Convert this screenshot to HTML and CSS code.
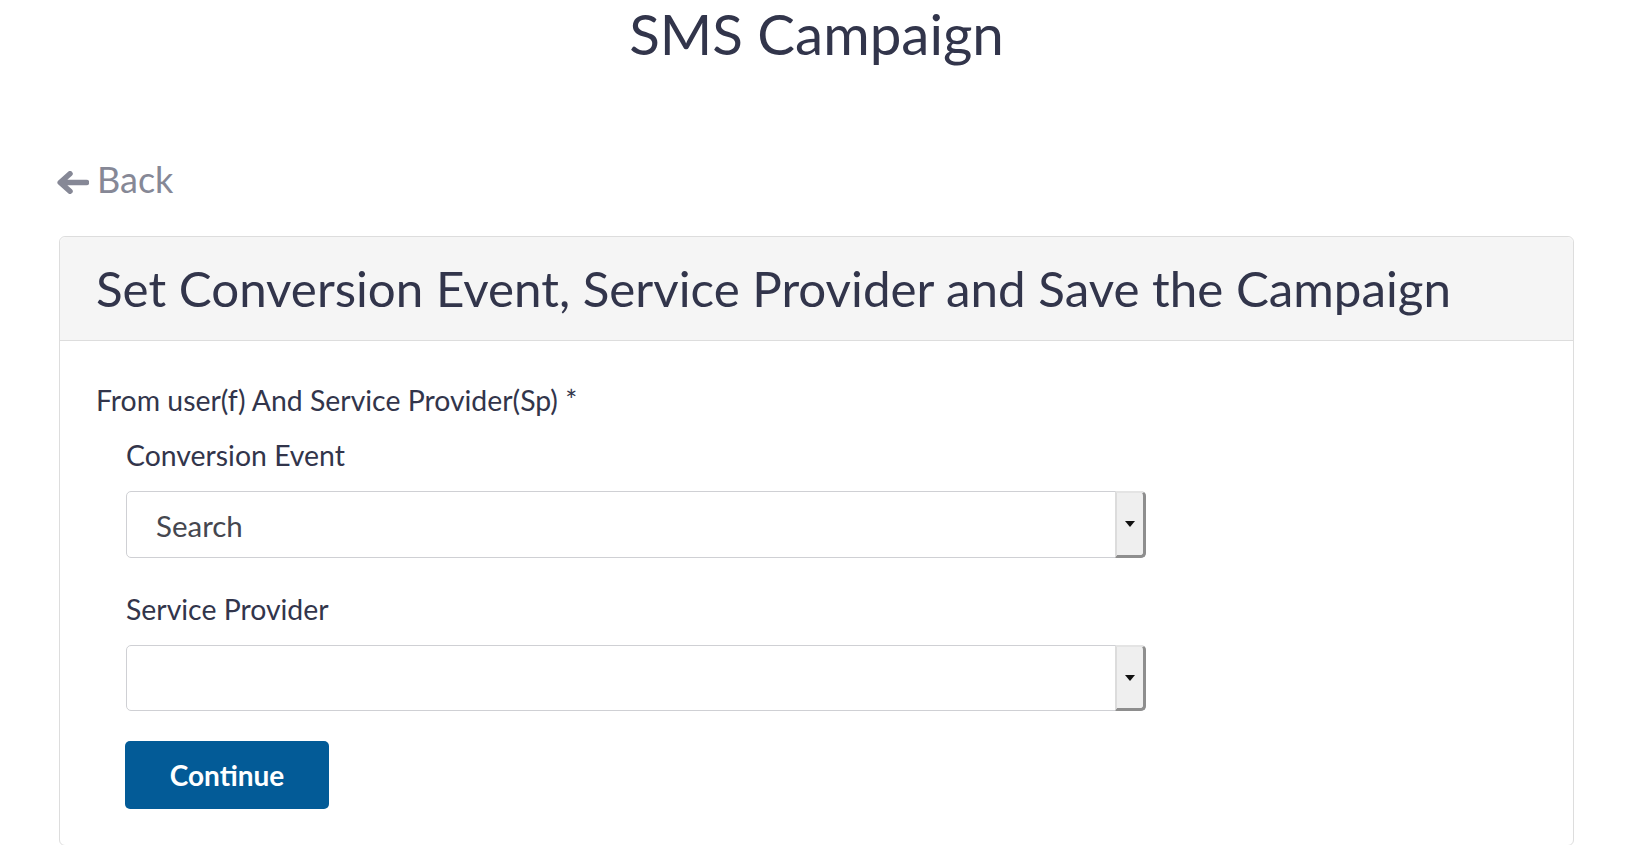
FILE: index.html
```html
<!DOCTYPE html>
<html>
<head>
<meta charset="utf-8">
<link rel="stylesheet" href="styles.css">
</head>
<body>
<h1 class="page-title">SMS Campaign</h1>
<a class="back-link" href="#">
  <svg class="back-icon" width="32" height="23" viewBox="0 0 32 23"><path d="M29.5 11.5 H4.5 M13 2.8 L3.2 11.5 L13 20.2" fill="none" stroke="currentColor" stroke-width="5.5" stroke-linecap="round" stroke-linejoin="round"/></svg>
  <span>Back</span>
</a>
<div class="card">
  <div class="card-header">
    <h2 class="card-title">Set Conversion Event, Service Provider and Save the Campaign</h2>
  </div>
  <div class="card-body">
    <div class="group-label">From user(f) And Service Provider(Sp) *</div>
    <div class="group">
      <div class="field-label">Conversion Event</div>
      <div class="select">
        <div class="select-value">Search</div>
        <div class="select-btn"><span class="caret"></span></div>
      </div>
      <div class="field-label second">Service Provider</div>
      <div class="select short">
        <div class="select-value"></div>
        <div class="select-btn"><span class="caret"></span></div>
      </div>
      <button class="btn-primary">Continue</button>
    </div>
  </div>
</div>
</body>
</html>
```

FILE: styles.css
```css
html, body {
  margin: 0;
  padding: 0;
  background: #ffffff;
}
body {
  font-family: Lato, "Open Sans", sans-serif;
  color: #32354b;
  overflow: hidden;
  height: 845px;
}
.page-title {
  margin: 0;
  font-size: 56.5px;
  font-weight: 400;
  line-height: 1.2;
  text-align: center;
  color: #32354b;
}
.back-link {
  display: flex;
  align-items: center;
  gap: 8px;
  margin: 90px 0 0 57px;
  width: max-content;
  font-size: 36px;
  line-height: 1.2;
  color: #868896;
  text-decoration: none;
}
.back-icon {
  display: block;
  margin-top: 7px;
}
.card {
  margin: 35px 59px 0 59px;
  border: 1px solid #dddddd;
  border-radius: 6px;
  height: 608px;
}
.card-header {
  background: #f5f5f5;
  border-bottom: 1px solid #dddddd;
  border-radius: 6px 6px 0 0;
  padding: 22px 37px 22px 36px;
}
.card-title {
  margin: 0;
  font-size: 49.3px;
  font-weight: 400;
  line-height: 1.2;
  color: #32354b;
}
.card-body {
  padding: 42px 37px 34px 36px;
}
.group-label {
  font-size: 28.4px;
  line-height: 1.2;
  color: #32354b;
}
.group {
  padding-left: 30px;
  display: flex;
  flex-direction: column;
  align-items: flex-start;
}
.field-label {
  margin-top: 21px;
  font-size: 28.4px;
  line-height: 1.2;
  color: #32354b;
}
.field-label.second {
  margin-top: 34px;
}
.select {
  margin-top: 19px;
  width: 1020px;
  height: 67px;
  box-sizing: border-box;
  border: 1px solid #cfd0d4;
  border-radius: 5px;
  display: flex;
  background: #fff;
}
.select.short {
  margin-top: 19px;
  height: 66px;
}
.select-value {
  flex: 1;
  display: flex;
  align-items: center;
  padding-left: 29px;
  font-size: 29.5px;
  color: #45474f;
  padding-top: 1px;
}
.select-btn {
  width: 31px;
  box-sizing: border-box;
  background: #efefef;
  border-left: 2px solid #dcdcdc;
  border-top: 2px solid #e4e4e4;
  border-right: 3px solid #8e8e8e;
  border-bottom: 3px solid #8e8e8e;
  border-radius: 0 5px 5px 0;
  margin: -1px -1px -1px 0;
  display: flex;
  align-items: center;
  justify-content: center;
}
.caret {
  width: 0;
  height: 0;
  border-left: 5px solid transparent;
  border-right: 5px solid transparent;
  border-top: 6px solid #111;
}
.btn-primary {
  margin-top: 30px;
  margin-left: -1px;
  width: 204px;
  height: 68px;
  border: none;
  border-radius: 5px;
  background: #035b97;
  color: #ffffff;
  font-family: Lato, "Open Sans", sans-serif;
  font-size: 28px;
  font-weight: 700;
  cursor: pointer;
}
```
